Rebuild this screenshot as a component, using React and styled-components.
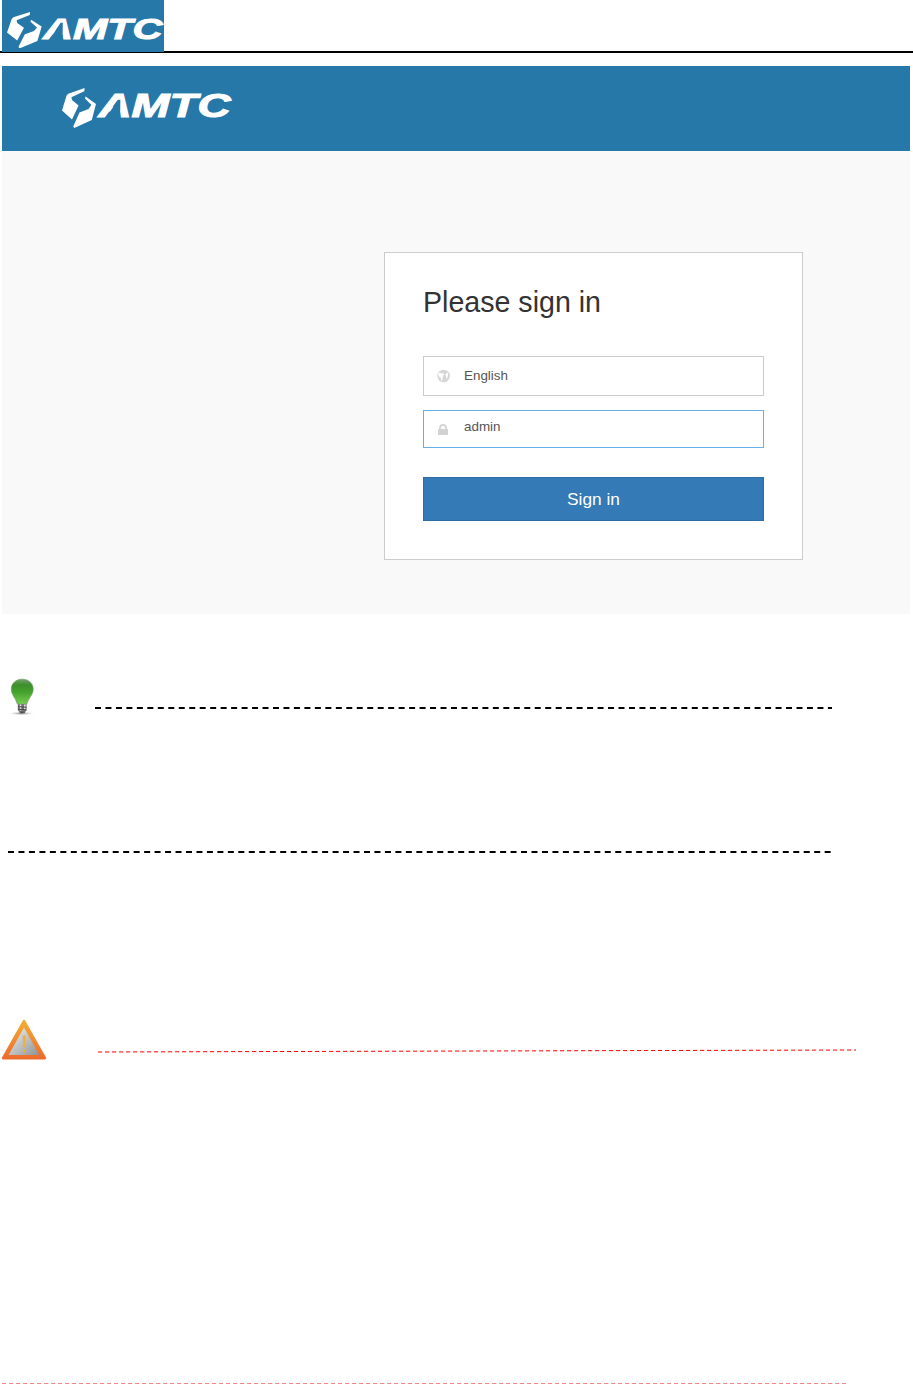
import React from 'react'
import styled, { createGlobalStyle } from "styled-components";

const GlobalStyle = createGlobalStyle`
    *{
        box-sizing: border-box;
    }
    body{
        margin: 0;
        background: #fff;
        font-family: "Liberation Sans", Arial, sans-serif;
    }
    svg{
        display: block;
    }
`;

//Logo
const Brand = ({ width, height, markScale, textX, textWidth }) => (
    <svg width={width} height={height} viewBox={`0 0 ${width} ${height}`}>
        <g transform={`scale(${markScale}, ${height / 40})`} fill="#fff">
            <path d="M22.6 0 L22.3 3.2 L9.4 9.2 L10 12 L16.6 17.4 L10 31.4 L0 22.6 L4.6 7.6 Q6 5.4 8.4 5 Z" />
            <path d="M23.6 8.4 L34 16 L29.8 32 L12.3 40 L11.2 38.5 L17.5 24.5 L26.5 21 L29.4 17 L23 10.6 Z" />
        </g>
        <g transform={`translate(${textX}, ${height * 0.733}) scale(1, ${height / 40})`}>
            <BrandText x="0" y="0" textLength={textWidth} lengthAdjust="spacingAndGlyphs">AMTC</BrandText>
            <path
                transform={`scale(${textWidth / 133}, 1)`}
                d="M7.4 .8 L19.6 -17.6 L22 -17.6 L21.8 .8 Z"
                fill="#2578a8"
            />
        </g>
    </svg>
);

//Icons
const Globe = () => (
    <svg width="14" height="14" viewBox="0 0 14 14">
        <circle cx="6.6" cy="7" r="6.3" fill="#d6d6d6" />
        <path d="M1 5 L2.6 3.6 L4.6 4.4 L6.4 4.2 L7.2 5.6 L6 6.8 L6.2 8.2 L5.2 9.4 L5.6 12 L4.4 11.4 L3.8 9 L2 7.6 Z" fill="#fff" />
        <path d="M8.8 5 L10.2 3.6 L11.4 5 L10.8 6.4 L10.4 9 L9.6 10 L9.2 7.4 L8.4 6.4 Z" fill="#fff" />
    </svg>
);

const Lock = () => (
    <svg width="10" height="14" viewBox="0 0 10 14">
        <path d="M2 8 V5.8 a3 3 0 0 1 6 0 V8" fill="none" stroke="#d2d2d2" strokeWidth="1.7" />
        <rect y="7" width="10" height="6" rx=".6" fill="#d2d2d2" />
    </svg>
);

const Bulb = () => (
    <svg width="36" height="40" viewBox="0 0 36 40">
        <defs>
            <linearGradient id="glass" x2="0" y2="1">
                <stop offset="0" stopColor="#75a36c" />
                <stop offset=".22" stopColor="#3d8e2c" />
                <stop offset=".5" stopColor="#43a22d" />
                <stop offset="1" stopColor="#79d052" />
            </linearGradient>
            <radialGradient id="shade">
                <stop offset="0" stopColor="#777" />
                <stop offset="1" stopColor="#fff" stopOpacity="0" />
            </radialGradient>
        </defs>
        <ellipse cx="21.5" cy="36.4" rx="14" ry="2.2" fill="url(#shade)" />
        <path d="M22.2 2.2 C15.5 2.2 11.3 6.6 11.3 12.3 C11.3 18 16 21 17 26.6 Q22 29 27 26.6 C28.3 21 33.2 18 33.2 12.3 C33.2 6.6 29 2.2 22.2 2.2 Z" fill="url(#glass)" stroke="#6b9961" strokeWidth=".7" />
        <path d="M17.8 27 h8.8 v6 l-2 3 h-4.7 l-2.1 -3 Z" fill="#777" />
        <path d="M20.5 27.4 v6 M24.8 27.4 v5" stroke="#e8e8e8" strokeWidth="1.4" />
        <path d="M18 29.6 l8.5 .7 M18 32.2 l8.5 .7 M20 35.2 h4.8" stroke="#444" strokeWidth="1" />
    </svg>
);

const Warning = () => (
    <svg width="46" height="41" viewBox="0 0 46 41">
        <defs>
            <linearGradient id="rim" x2="0" y2="1">
                <stop offset="0" stopColor="#f2ad32" />
                <stop offset="1" stopColor="#ed6b2c" />
            </linearGradient>
            <linearGradient id="plate" x2="1" y2="1">
                <stop offset="0" stopColor="#f3f3f3" />
                <stop offset=".55" stopColor="#bcbdbf" />
                <stop offset="1" stopColor="#909295" />
            </linearGradient>
        </defs>
        <path d="M23 2.4 L43.6 39 H2.4 Z" fill="url(#rim)" stroke="url(#rim)" strokeWidth="3" strokeLinejoin="round" />
        <path d="M23 8.6 L38.4 36 H7.6 Z" fill="url(#plate)" />
        <path d="M21.7 16.5 h3 l-.7 12 h-1.6 Z" fill="#eeb137" />
        <circle cx="23.2" cy="32" r="1.4" fill="#eeb137" />
    </svg>
);

const Dashes = ({ width, color, weight = 1, dash, rise = 0 }) => (
    <svg width={width} height="4" viewBox={`0 0 ${width} 4`}>
        <line x1="0" y1={2 + rise / 2} x2={width} y2={2 - rise / 2} stroke={color} strokeWidth={weight} strokeDasharray={dash} />
    </svg>
);

const App = () => {
    return (
        <Page>
            <GlobalStyle />
            <PageHeader>
                <HeaderLogo>
                    <Brand width={157} height={36.4} markScale={1.02} textX={36} textWidth={119.5} />
                </HeaderLogo>
            </PageHeader>
            <Screen>
                <Banner>
                    <Brand width={171} height={40} markScale={1} textX={36.5} textWidth={132} />
                </Banner>
                <Card>
                    <Title>Please sign in</Title>
                    <Field>
                        <Globe />
                        <span>English</span>
                    </Field>
                    <Field $active>
                        <Lock />
                        <span>admin</span>
                    </Field>
                    <SignIn>Sign in</SignIn>
                </Card>
            </Screen>
            <Note $top={63} $height={40} $gap={59} $drop={28.5}>
                <Bulb />
                <Dashes width={737} color="#000" weight={1.8} dash="6 4.47" />
            </Note>
            <Rule $top={133} $left={8}>
                <Dashes width={824} color="#000" weight={2} dash="6 4.47" />
            </Rule>
            <Note $top={165} $height={42} $left={1} $gap={51} $drop={29.5}>
                <Warning />
                <Dashes width={758} color="#f00" dash="4.2 2.8" rise={2} />
            </Note>
            <Rule $top={320.5} $left={2}>
                <Dashes width={844} color="#e01414" dash="4.2 2.8" />
            </Rule>
        </Page>
    )
}

const Page = styled.div`
    width: 913px;
    height: 1384px;
    overflow: hidden;
`;

const PageHeader = styled.header`
    height: 53px;
    padding-left: 2px;
    border-bottom: 2px solid #000;
`;

const HeaderLogo = styled.div`
    width: 162px;
    height: 52px;
    padding: 11.5px 0 0 5px;
    position: relative;
    background: #2578a8;
`;

const BrandText = styled.text`
    font-size: 33px;
    font-weight: bold;
    font-style: italic;
    fill: #fff;
    stroke: #fff;
    stroke-width: 1.1px;
`;

const Screen = styled.main`
    width: 908px;
    height: 548px;
    margin: 13px 0 0 2px;
    background: #f9f9f9;
`;

const Banner = styled.div`
    height: 85px;
    padding: 22px 0 0 60px;
    background: #2578a8;
`;

const Card = styled.section`
    display: flex;
    flex-direction: column;
    width: 419px;
    height: 308px;
    margin: 101px 0 0 382px;
    padding: 32px 38px;
    background: #fff;
    border: 1px solid #ccc;
`;

const Title = styled.h1`
    margin: 0 0 37px;
    font-size: 28.6px;
    line-height: 34px;
    font-weight: normal;
    color: #333;
`;

const Field = styled.div`
    display: flex;
    align-items: center;
    flex-shrink: 0;
    height: ${({ $active }) => ($active ? 38 : 40)}px;
    margin-bottom: ${({ $active }) => ($active ? 29 : 14)}px;
    padding-left: ${({ $active }) => ($active ? 14 : 13)}px;
    border: 1px solid ${({ $active }) => ($active ? '#66afe9' : '#ccc')};
    font-size: 13.4px;
    color: #555;
    span{
        margin-left: ${({ $active }) => ($active ? 16 : 13)}px;
        padding-bottom: ${({ $active }) => ($active ? 5 : 1)}px;
    }
`;

const SignIn = styled.button`
    flex-shrink: 0;
    height: 44px;
    padding: 1px 0 0;
    background: #337ab7;
    border: 1px solid #2e6da4;
    font-family: inherit;
    font-size: 17.3px;
    color: #fff;
`;

const Note = styled.div`
    display: flex;
    gap: ${({ $gap }) => $gap}px;
    height: ${({ $height }) => $height}px;
    margin-top: ${({ $top }) => $top}px;
    padding-left: ${({ $left = 0 }) => $left}px;
    svg + svg{
        margin-top: ${({ $drop }) => $drop}px;
    }
`;

const Rule = styled.div`
    padding: ${({ $top, $left }) => `${$top}px 0 0 ${$left}px`};
`;


export default App
